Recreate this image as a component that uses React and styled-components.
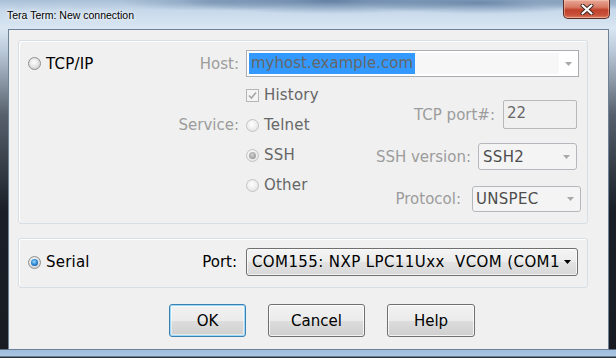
import React from "react";
import styled, { createGlobalStyle } from "styled-components";

const GlobalStyle = createGlobalStyle`
  html, body {
    margin: 0;
    padding: 0;
    background: #1a1f26;
    overflow: hidden;
  }
`;

const Window = styled.div`
  width: 616px;
  height: 358px;
  box-sizing: border-box;
  display: flex;
  flex-direction: column;
  padding-bottom: 8px;
  font-family: "DejaVu Sans", sans-serif;
  font-size: 15px;
  background:
    radial-gradient(ellipse 150px 13px at 330px 1px, rgba(52, 86, 130, 0.6), transparent),
    radial-gradient(ellipse 120px 11px at 480px 3px, rgba(52, 86, 130, 0.55), transparent),
    radial-gradient(ellipse 90px 9px at 210px 2px, rgba(80, 112, 150, 0.4), transparent),
    radial-gradient(ellipse 60px 8px at 590px 2px, rgba(80, 112, 150, 0.4), transparent),
    linear-gradient(
      to bottom,
      #a9bfd6 0,
      #c6d8ea 10px,
      #d9e6f2 28px,
      #bccbdb 50px,
      #56606c 115px,
      #1b2028 210px,
      #181c22 349px,
      #9fbddd 350px,
      #a9c6e4 356px,
      #2b3139 357px
    );
`;

const TitleBar = styled.div`
  height: 29px;
  flex: none;
  display: flex;
`;

const TitleText = styled.div`
  align-self: center;
  margin: 1px 0 0 7px;
  font-family: "Liberation Sans", Arial, sans-serif;
  font-size: 10.5px;
  color: #000;
  text-shadow: 0 0 6px rgba(255, 255, 255, 0.95), 0 0 3px rgba(255, 255, 255, 0.9);
`;

const CloseButton = styled.div`
  margin-left: auto;
  margin-right: 6px;
  width: 47px;
  height: 19px;
  box-sizing: border-box;
  border: 1px solid #5b2c24;
  border-top: none;
  border-radius: 0 0 5px 5px;
  background: linear-gradient(to bottom, #e8a896 0%, #d77a64 40%, #c1412b 55%, #c9533b 85%, #dd8a70 100%);
  box-shadow: inset 0 0 0 1px rgba(255, 210, 195, 0.45);
  display: flex;
  align-items: center;
  justify-content: center;
`;

const Client = styled.div`
  flex: 1;
  margin: 0 7px 0 8px;
  box-sizing: border-box;
  border: 1px solid #6f8196;
  background: #f0f0f0;
  padding: 10px 20px 0 9px;
  display: flex;
  flex-direction: column;
`;

const Group = styled.div`
  height: ${(p) => p.$h}px;
  margin-top: ${(p) => p.$top || 0}px;
  box-sizing: border-box;
  border: 1px solid #d5dfe5;
  border-radius: 3px;
  box-shadow: inset 1px 1px 0 #fff;
  padding: 9px ${(p) => p.$right}px 0 9px;
  display: flex;
  flex-direction: column;
`;

const Row = styled.div`
  height: ${(p) => p.$h}px;
  display: flex;
  align-items: center;
`;

const Choice = styled.label`
  display: flex;
  align-items: center;
  gap: 5px;
  color: ${(p) => (p.$disabled ? "#666" : "#000")};
  letter-spacing: 0.2px;
`;

const RadioMark = styled.span`
  flex: none;
  width: 13px;
  height: 13px;
  box-sizing: border-box;
  border-radius: 50%;
  border: 1px solid ${(p) => (p.$disabled ? "#c3c3c3" : "#8e8f8f")};
  background: ${(p) =>
    p.$disabled
      ? "radial-gradient(circle at 45% 40%, #ffffff 0, #f0f0f0 45%, #dcdcdc 100%)"
      : "radial-gradient(circle at 45% 40%, #ffffff 0, #e6e6e6 45%, #c4c4c4 100%)"};
  position: relative;

  &::after {
    content: "";
    display: ${(p) => (p.$checked ? "block" : "none")};
    position: absolute;
    inset: 2px;
    border-radius: 50%;
    background: ${(p) =>
      p.$disabled
        ? "radial-gradient(circle at 45% 40%, #d2d2d2 0, #a4a4a4 60%, #8a8a8a 100%)"
        : "radial-gradient(circle at 45% 40%, #9fdcff 0, #2a86d3 50%, #0e3f7a 100%)"};
  }
`;

const CheckMark = styled.span`
  flex: none;
  width: 13px;
  height: 13px;
  box-sizing: border-box;
  border: 1px solid #b6b6b6;
  background: #f4f4f4;
  display: flex;
  align-items: center;
  justify-content: center;
`;

const Label = styled.span`
  color: ${(p) => (p.$disabled ? "#9c9c9c" : "#000")};
  margin-left: ${(p) => (p.$auto ? "auto" : "0")};
  margin-right: ${(p) => p.$gap || 0}px;
  white-space: nowrap;
`;

const HostCombo = styled.div`
  width: 333px;
  height: 27px;
  box-sizing: border-box;
  border: 1px solid #abadb3;
  background: #fff;
  display: flex;
`;

const EditArea = styled.div`
  flex: 1;
  margin: 2px 0 2px 2px;
  background: #f7f7f7;
  display: flex;
`;

const Selection = styled.span`
  background: #3399ff;
  color: #666;
  padding: 0 2px;
  line-height: 21px;
`;

const ArrowCell = styled.div`
  width: 19px;
  display: flex;
  align-items: center;
  justify-content: center;
`;

const DropCombo = styled.div`
  width: ${(p) => p.$w}px;
  height: ${(p) => p.$h}px;
  box-sizing: border-box;
  border: 1px solid ${(p) => (p.$enabled ? "#707070" : "#b4b8bc")};
  border-radius: 3px;
  background: ${(p) =>
    p.$enabled
      ? "linear-gradient(to bottom, #f4f4f4 0%, #ececec 50%, #e2e2e2 51%, #d8d8d8 100%)"
      : "#f4f4f4"};
  box-shadow: ${(p) => (p.$enabled ? "inset 0 0 0 1px rgba(255,255,255,0.7)" : "none")};
  display: flex;
  align-items: center;
  padding-left: ${(p) => p.$pad}px;
  padding-right: 6px;
  color: ${(p) => (p.$enabled ? "#000" : "#4d4d4d")};
`;

const ComboText = styled.span`
  flex: 1;
  min-width: 0;
  margin-right: ${(p) => p.$gap || 0}px;
  overflow: hidden;
  white-space: nowrap;
  letter-spacing: ${(p) => p.$ls || 0}px;
`;

const PortInput = styled.div`
  width: 74px;
  height: 29px;
  box-sizing: border-box;
  border: 1px solid #b9b9b9;
  border-radius: 2px;
  padding: 3px 0 0 3px;
  color: #666;
`;

const BodyRow = styled.div`
  margin-top: 3px;
  display: flex;
`;

const ServiceCol = styled.div`
  width: 211px;
  padding-top: 30px;
`;

const OptionCol = styled.div`
  margin-left: 7px;
  display: flex;
  flex-direction: column;
`;

const Option = styled.div`
  height: 30px;
  display: flex;
  align-items: center;
  justify-content: ${(p) => (p.$end ? "flex-end" : "flex-start")};
`;

const RightPanel = styled.div`
  margin-left: auto;
  padding-top: 20px;
  display: flex;
  flex-direction: column;
  align-items: flex-end;
`;

const FieldRow = styled.div`
  display: flex;
  align-items: center;
  margin-top: ${(p) => p.$top || 0}px;
  margin-right: ${(p) => p.$shift || 0}px;
`;

const ButtonRow = styled.div`
  margin-top: 16px;
  padding-left: 151px;
  display: flex;
  gap: 22px;
`;

const Button = styled.div`
  width: ${(p) => p.$w}px;
  height: 33px;
  box-sizing: border-box;
  border: 1px solid ${(p) => (p.$default ? "#3c7fb1" : "#707070")};
  border-radius: 3px;
  background: linear-gradient(to bottom, #f2f2f2 0%, #ebebeb 50%, #dddddd 51%, #cfcfcf 100%);
  box-shadow: ${(p) =>
    p.$default ? "inset 0 0 0 1px #9ad9f7, inset 0 0 0 2px rgba(255,255,255,0.5)" : "inset 0 0 0 1px rgba(255,255,255,0.75)"};
  display: flex;
  align-items: center;
  justify-content: center;
  color: #000;
`;

const Arrow = ({ color }) => (
  <svg width="7" height="4" viewBox="0 0 7 4" style={{ flex: "none" }}>
    <polygon points="0,0 7,0 3.5,4" fill={color} />
  </svg>
);

const Radio = ({ label, checked, disabled }) => (
  <Choice $disabled={disabled}>
    <RadioMark $checked={checked} $disabled={disabled} />
    {label}
  </Choice>
);

export default function App() {
  return (
    <>
      <GlobalStyle />
      <Window>
        <TitleBar>
          <TitleText>Tera Term: New connection</TitleText>
          <CloseButton>
            <svg width="14" height="11" viewBox="0 0 14 11">
              <path d="M2.5 1.5 L11.5 9.5 M11.5 1.5 L2.5 9.5" stroke="#3b2320" strokeWidth="4" strokeLinecap="round" />
              <path d="M2.5 1.5 L11.5 9.5 M11.5 1.5 L2.5 9.5" stroke="#ffffff" strokeWidth="2.2" strokeLinecap="round" />
            </svg>
          </CloseButton>
        </TitleBar>
        <Client>
          <Group $h={184} $right={8}>
            <Row $h={27}>
              <Radio label="TCP/IP" />
              <Label $disabled $auto $gap={7}>
                Host:
              </Label>
              <HostCombo>
                <EditArea>
                  <Selection>myhost.example.com</Selection>
                </EditArea>
                <ArrowCell>
                  <Arrow color="#a8a8a8" />
                </ArrowCell>
              </HostCombo>
            </Row>
            <BodyRow>
              <ServiceCol>
                <Option $end>
                  <Label $disabled>Service:</Label>
                </Option>
              </ServiceCol>
              <OptionCol>
                <Option>
                  <Choice $disabled>
                    <CheckMark>
                      <svg width="9" height="9" viewBox="0 0 9 9">
                        <path d="M1 4.5 L3.4 7 L8 1.5" fill="none" stroke="#a6a6a6" strokeWidth="1.6" />
                      </svg>
                    </CheckMark>
                    History
                  </Choice>
                </Option>
                <Option>
                  <Radio label="Telnet" disabled />
                </Option>
                <Option>
                  <Radio label="SSH" disabled checked />
                </Option>
                <Option>
                  <Radio label="Other" disabled />
                </Option>
              </OptionCol>
              <RightPanel>
                <FieldRow $shift={2}>
                  <Label $disabled $gap={8}>
                    TCP port#:
                  </Label>
                  <PortInput>22</PortInput>
                </FieldRow>
                <FieldRow $top={14} $shift={2}>
                  <Label $disabled $gap={7}>
                    SSH version:
                  </Label>
                  <DropCombo $w={99} $h={27} $pad={4}>
                    <ComboText $ls={0.3}>SSH2</ComboText>
                    <Arrow color="#a8a8a8" />
                  </DropCombo>
                </FieldRow>
                <FieldRow $top={16} $shift={-2}>
                  <Label $disabled $gap={11}>
                    Protocol:
                  </Label>
                  <DropCombo $w={109} $h={26} $pad={3}>
                    <ComboText $ls={0.3}>UNSPEC</ComboText>
                    <Arrow color="#a8a8a8" />
                  </DropCombo>
                </FieldRow>
              </RightPanel>
            </BodyRow>
          </Group>
          <Group $h={50} $top={14} $right={9}>
            <Row $h={28}>
              <Radio label="Serial" checked />
              <Label $auto $gap={9}>
                Port:
              </Label>
              <DropCombo $enabled $w={332} $h={28} $pad={5}>
                <ComboText $ls={0.4} $gap={5}>
                  COM155: NXP LPC11Uxx&nbsp; VCOM (COM155)
                </ComboText>
                <Arrow color="#000" />
              </DropCombo>
            </Row>
          </Group>
          <ButtonRow>
            <Button $w={77} $default>
              OK
            </Button>
            <Button $w={97}>Cancel</Button>
            <Button $w={88}>Help</Button>
          </ButtonRow>
        </Client>
      </Window>
    </>
  );
}
